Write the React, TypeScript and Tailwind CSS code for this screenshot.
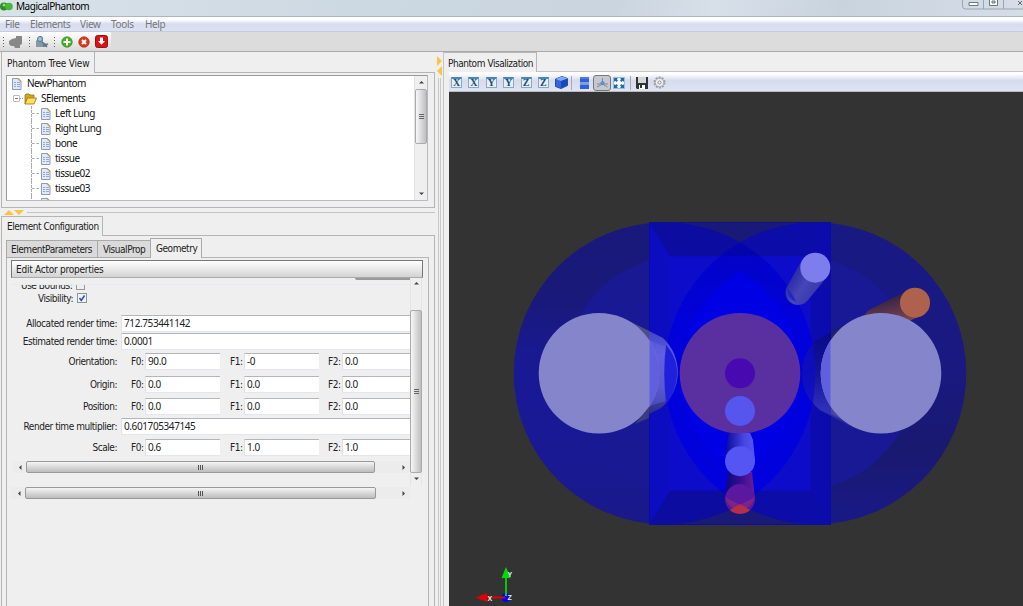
import React from 'react';

const tree = ['Left Lung', 'Right Lung', 'bone', 'tissue', 'tissue02', 'tissue03'];

function DocIcon() {
  return (
    <svg width="10" height="12" viewBox="0 0 10 12" className="shrink-0">
      <path d="M.5.5h6l2.500 2.500v8.500h-8.500z" fill="#dfe9f9" stroke="#8c9cb8" />
      <path d="M6 .5l3 3" stroke="#c4a35a" strokeWidth="1.400" />
      <path d="M2 4.500h2M5 4.500h3M2 6.500h2M5 6.500h3M2 8.500h2M5 8.500h3" stroke="#92a9d4" />
    </svg>
  );
}

function Folder() {
  return (
    <svg width="13" height="12" viewBox="0 0 13 12" className="shrink-0">
      <path d="M1 11V2l1-1h3l1 1h4v3" fill="#d3a61d" stroke="#8c7428" strokeWidth=".8" />
      <path d="M1 11 3.500 5h9L10 11z" fill="#ffdf59" stroke="#8f741d" strokeWidth=".8" />
    </svg>
  );
}

function Arrow({ dir }: { dir: 'up' | 'down' | 'left' | 'right' }) {
  const d = { up: 'M3 6.5 5.500 4 8 6.500z', down: 'M3 4.500h5L5.500 7z', left: 'M6.500 3v5L4 5.500z', right: 'M4.500 3v5L7 5.500z' }[dir];
  return (
    <svg width="11" height="11" viewBox="0 0 11 11" className="shrink-0">
      <path d={d} fill="#444" />
    </svg>
  );
}

function HBar({ className, thumb }: { className: string; thumb: string }) {
  return (
    <div className={'flex h-[12px] shrink-0 items-center bg-[#ececec] ' + className}>
      <Arrow dir="left" />
      <div className={'flex h-[12px] items-center justify-center gap-px rounded-[2px] border border-[#999] bg-gradient-to-b from-[#f5f5f5] via-[#d9d9d9] to-[#bdbdbd] ' + thumb}>
        <i className="h-[5px] w-px bg-[#555]" />
        <i className="h-[5px] w-px bg-[#555]" />
        <i className="h-[5px] w-px bg-[#555]" />
      </div>
      <div className="flex-1" />
      <div className="mr-px flex"><Arrow dir="right" /></div>
    </div>
  );
}

const Grip = () => (
  <div className="flex w-px flex-col gap-[2px]">
    <i className="h-px bg-[#666]" /><i className="h-px bg-[#666]" /><i className="h-px bg-[#666]" /><i className="h-px bg-[#666]" />
  </div>
);

const field = 'h-[17px] border-t border-l border-t-[#b4b4bd] border-l-[#e0e2ea] border-b border-b-[#e3e6ee] bg-white pl-[2px] font-[Noto_Sans] text-[10px] leading-[14px] tracking-[-0.4px]';

function Long({ label, value, className }: { label: string; value: string; className: string }) {
  return (
    <div className={'flex shrink-0 items-center ' + className}>
      <div className="w-[106px] text-right">{label}</div>
      <div className={'ml-[4px] flex-1 ' + field}>{value}</div>
    </div>
  );
}

function Triple({ label, values, className }: { label: string; values: string[]; className: string }) {
  return (
    <div className={'flex shrink-0 items-center ' + className}>
      <div className="w-[106px] text-right">{label}</div>
      {values.map((v, i) => (
        <div key={i} className={'flex items-center ' + (i === 0 ? 'ml-[14px] w-[89px] shrink-0' : i === 1 ? 'ml-[10px] w-[89px] shrink-0' : 'ml-[9px] flex-1')}>
          <span className="w-[14px] shrink-0 whitespace-nowrap">F{i}:</span>
          <div className={'flex-1 ' + field}>{v}</div>
        </div>
      ))}
    </div>
  );
}

function AxisIcon({ letter }: { letter: string }) {
  return (
    <div className="mr-[6.400px] flex h-[11px] w-[11px] shrink-0 items-center justify-center border border-t-2 border-[#8fa9ba] border-t-[#4c86b5] bg-[#e4f0f4] font-[Liberation_Serif] text-[10px] leading-[8px] font-bold tracking-normal text-[#174a7c]">
      {letter}
    </div>
  );
}

function Scene() {
  return (
    <svg className="block" width="574" height="514" viewBox="449 92 574 514">
      <defs>
        <clipPath id="box"><path d="M649.500 222.500H830.500V524.500H649.500z" /></clipPath>
        <clipPath id="left"><circle cx="664.700" cy="373.300" r="151" /></clipPath>
        <clipPath id="right"><circle cx="815.300" cy="373.300" r="151" /></clipPath>
        <clipPath id="rearbox"><path d="M669.500 256.300H810.500V490.500H669.500z" /></clipPath>
        <clipPath id="rearleft"><circle cx="681.500" cy="373.300" r="117.200" /></clipPath>
        <clipPath id="lowred"><path d="M725 513 740 504l15 9v6h-30z" /></clipPath>
        <clipPath id="lung"><circle cx="599" cy="373.300" r="60.300" /></clipPath>
        <clipPath id="lung2"><circle cx="881" cy="373.300" r="60.300" /></clipPath>
        <linearGradient id="shell" x1="0" y1="0" x2="0" y2="1"><stop offset="0" stopColor="#19197c" /><stop offset=".25" stopColor="#191979" /><stop offset=".42" stopColor="#191990" /><stop offset=".6" stopColor="#191997" /><stop offset=".85" stopColor="#191991" /><stop offset="1" stopColor="#191988" /></linearGradient>
        <linearGradient id="shell2" x1="0" y1="0" x2="0" y2="1"><stop offset="0" stopColor="#191984" /><stop offset=".5" stopColor="#191980" /><stop offset=".75" stopColor="#191970" /><stop offset="1" stopColor="#191988" /></linearGradient>
        <linearGradient id="rearshell" x1="0" y1="0" x2="0" y2="1"><stop offset="0" stopColor="#191992" /><stop offset=".5" stopColor="#191997" /><stop offset="1" stopColor="#191992" /></linearGradient>
        <linearGradient id="lens" x1="0" y1="0" x2="0" y2="1"><stop offset=".1" stopColor="#0303c8" /><stop offset=".35" stopColor="#0101dc" /><stop offset="1" stopColor="#0101de" /></linearGradient>
        <linearGradient id="cyl" x1="0" y1="0" x2="0" y2="1"><stop offset="0" stopColor="#3939b8" /><stop offset=".35" stopColor="#5a5adf" /><stop offset=".65" stopColor="#5050c8" /><stop offset="1" stopColor="#202068" /></linearGradient>
        <linearGradient id="cyl2" x1="0" y1="0" x2="0" y2="1"><stop offset="0" stopColor="#070784" /><stop offset=".5" stopColor="#14149c" /><stop offset=".85" stopColor="#3030b8" /><stop offset="1" stopColor="#2525a5" /></linearGradient>
        <linearGradient id="spine"><stop offset="0" stopColor="#080896" /><stop offset=".65" stopColor="#4747e4" /><stop offset="1" stopColor="#5555f4" /></linearGradient>
        <linearGradient id="spineRed"><stop offset="0" stopColor="#08087c" /><stop offset=".5" stopColor="#340e90" /><stop offset="1" stopColor="#6c1b9d" /></linearGradient>
        <linearGradient id="rod" gradientUnits="userSpaceOnUse" x1="793" y1="278" x2="814" y2="292"><stop offset="0" stopColor="#2e2ea8" /><stop offset=".5" stopColor="#4646b8" /><stop offset="1" stopColor="#3b3bac" /></linearGradient>
        <linearGradient id="rodOrange" x1="0" y1="0" x2=".3" y2="1"><stop offset=".1" stopColor="#291c44" /><stop offset=".7" stopColor="#683b4c" /><stop offset="1" stopColor="#8b4c4c" /></linearGradient>
      </defs>
      <rect x="449" y="92" width="574" height="514" fill="#333" />
      <circle cx="664.700" cy="373.300" r="151" fill="url(#shell)" />
      <circle cx="815.300" cy="373.300" r="151" fill="url(#shell2)" />
      <circle cx="681.500" cy="373.300" r="117.200" fill="url(#rearshell)" />
      <circle cx="798.500" cy="373.300" r="117.200" fill="#191996" />
      <g clipPath="url(#box)">
        <rect x="649" y="222" width="182" height="303" fill="#191978" />
        <circle cx="664.700" cy="373.300" r="151" fill="#0c0ca0" />
        <circle cx="815.300" cy="373.300" r="151" fill="#0c0ca8" />
        <path d="M649 222l21 34v235l-21 34z" fill="#0c0cc0" />
        <path d="M831 222l-20.500 34v235l20.500 34z" fill="#0c0cae" />
        <g clipPath="url(#rearbox)">
          <rect x="669" y="256" width="142" height="235" fill="#0c0cca" />
        </g>
        <g clipPath="url(#left)">
          <circle cx="815.300" cy="373.300" r="151" fill="url(#lens)" />
          <g clipPath="url(#right)">
            <path d="M660 222h160v34.300H660z" fill="#0404ac" />
            <path d="M660 490.500h160v35H660z" fill="#0404b4" />
          </g>
        </g>
        <g clipPath="url(#rearleft)">
          <circle cx="798.500" cy="373.300" r="117.200" fill="#0000e4" />
        </g>
      </g>
      <path d="M649.500 524V222.500H830.500V524.500H649.500" fill="none" stroke="#0909a8" strokeWidth=".8" />
      <path d="M622 318 649 331 663 338A46.800 46.800 0 0 1 661 408L632 423z" fill="url(#cyl)" />
      <path d="M666 345c8 9 11 18 11 28s-4 23-11 31q-4-31 0-59" fill="#2020dc" />
      <path d="M625 319l24 12v11z" fill="#4d4d88" />
      <path d="M649 340l17 7q-3 25 0 54l-17 5z" fill="#6868e4" opacity=".4" />
      <circle cx="599" cy="373.300" r="60.300" fill="#8585cc" />
      <g clipPath="url(#lung)"><path d="M649.500 300h20v150h-20z" fill="#6060de" /></g>
      <path d="M649 407v11l-14 6z" fill="#3b3b80" />
      <path d="M849 322 814 342A46.800 46.800 0 0 0 820 410L850 426z" fill="url(#cyl2)" />
      <path d="M831 332l22-11v25l-22 24z" fill="#20206c" />
      <path d="M831 405l25 22-25-13z" fill="#47479d" />
      <path d="M813 343q-11 12-11 30t11 30q4-30 0-60" fill="#0c0cc6" opacity=".8" />
      <path d="M903 293 871 309q-9 4-6 12l22 10 31-14z" fill="url(#rodOrange)" />
      <circle cx="915" cy="302.700" r="15" fill="#af624b" />
      <circle cx="881" cy="373.300" r="60.300" fill="#8585cc" />
      <g clipPath="url(#lung2)"><path d="M815 300h15.500v150h-15.500z" fill="#6060de" /></g>
      <path d="M802 260 788 285A11.700 11.700 0 0 0 808 300L827 277z" fill="url(#rod)" />
      <path d="M787.500 288q5 6 9 14-9-3-9-14z" fill="#2525c4" />
      <circle cx="815.300" cy="267.700" r="15" fill="#7d7ded" />
      <circle cx="740" cy="373.300" r="60.300" fill="#5a2fa0" />
      <circle cx="740" cy="373.300" r="15" fill="#4909b0" />
      <circle cx="740" cy="411" r="15" fill="#5656ee" />
      <path d="M728 472h24l3 27h-30z" fill="url(#spineRed)" />
      <path d="M729 433h21l3 7 2 21h-30l3-23z" fill="url(#spine)" />
      <circle cx="740" cy="461.200" r="15" fill="#5555f3" />
      <circle cx="740" cy="499" r="15" fill="#5a18a0" />
      <path d="M725.200 497 740 505l14.800-8a15 15 0 0 1-29.600 0" fill="#7d2482" />
      <g clipPath="url(#lowred)"><circle cx="740" cy="499" r="15" fill="#b33047" /></g>
      <circle cx="506" cy="597.500" r="4.500" fill="#0000f5" />
      <path d="M506 596V577" stroke="#0c0" strokeWidth="2" />
      <path d="M501.500 578 506 567l4.500 11z" fill="#00dc00" />
      <path d="M505 597.500H486" stroke="#e00000" strokeWidth="2" />
      <path d="M475.500 597.500 487 593v9z" fill="#df0000" />
      <g fill="#eee" fontFamily="Liberation Sans" fontSize="7" fontWeight="bold"><text x="507.500" y="576.500">Y</text><text x="487.500" y="600.500">X</text><text x="507.500" y="600">Z</text></g>
    </svg>
  );
}

export default function App() {
  return (
    <div className="flex h-[606px] w-[1023px] flex-col overflow-hidden bg-[#efefef] font-[DejaVu_Sans_Condensed] text-[10px] tracking-[-0.45px] whitespace-nowrap text-[#222]">
      <header className="flex h-[17px] shrink-0 justify-between border-b border-[#aeb5bc] bg-[linear-gradient(100deg,#d9e2e9_0%,#cbd7e1_40%,#cbd5df_60%,#d7e0e9_70%,#c9d3de_82%,#d5dee7_100%)]">
        <div className="flex h-[13px] items-center font-[Noto_Sans] text-[10px] leading-[13px] tracking-[-0.45px] text-black">
          <svg width="13" height="11" viewBox="0 0 13 11" className="mr-[3px]"><circle cx="4" cy="5.500" r="4" fill="#2f8d28" /><circle cx="9" cy="5.500" r="3.800" fill="#48b637" /><circle cx="4" cy="4" r="1.500" fill="#8edb79" /></svg>
          MagicalPhantom
        </div>
        <svg width="61" height="10" viewBox="0 0 61 10" fill="none"><path d="M.5 0v6q0 3 3 3H61M21.500 0v9M41.500 0v9" stroke="#99a5b1" /><path d="M7 2.500h9v3H7z" fill="#fff" stroke="#6c7784" /><path d="M27.500 0v5.500h8V0M30 1h3v2h-3z" fill="#fff" stroke="#6c7784" /><path d="M56 1l4 4M60 1l-4 4" stroke="#666" /></svg>
      </header>
      <nav className="flex h-[15px] shrink-0 items-center border-b border-[#c7cbdc] bg-gradient-to-b from-white from-20% via-[#d7ddef] via-50% to-[#dce2f4] pt-px pl-[5px] font-[Noto_Sans] text-[10px] tracking-[-0.35px] text-[#777]">
        <span className="w-[25px]">File</span><span className="w-[50px]">Elements</span><span className="w-[31px]">View</span><span className="w-[34px]">Tools</span><span>Help</span>
      </nav>
      <div className="flex h-[20px] shrink-0 border-b border-[#aaa] bg-[#dcdcdc]">
        <div className="flex h-[19px] items-center bg-gradient-to-b from-white to-[#d8d8d8] pl-[3px]">
          <Grip />
          <svg width="15" height="14" viewBox="0 0 15 14" className="ml-[4px]"><path d="M1 6l3-2 4-1V1h6v8l-2 1v3H7l-1-2H3L1 9z" fill="#888" /></svg>
          <div className="ml-[6px] flex"><Grip /></div>
          <svg width="15" height="14" viewBox="0 0 15 14" className="ml-[4px]"><path d="M2 11V6l2-3q3-4 5 0v4l4 2v3H2z" fill="#8499a8" /><circle cx="6" cy="4" r="2.500" fill="#9fc5dd" stroke="#5a7687" /><path d="M8 7l5 5M9 11l5-2" stroke="#60778a" strokeWidth="1.500" /></svg>
          <div className="ml-[5px] flex"><Grip /></div>
          <svg width="12" height="12" viewBox="0 0 12 12" className="ml-[6px]"><circle cx="6" cy="6" r="5.300" fill="#47af24" stroke="#318619" strokeWidth=".6" /><path d="M6 2.500v7M2.500 6h7" stroke="#fff" strokeWidth="2" /></svg>
          <svg width="12" height="12" viewBox="0 0 12 12" className="ml-[5px]"><circle cx="6" cy="6" r="5.300" fill="#dc391e" stroke="#ae2414" strokeWidth=".6" /><path d="M4 4l4 4M8 4L4 8" stroke="#fff" strokeWidth="1.900" /></svg>
          <svg width="13" height="13" viewBox="0 0 13 13" className="mr-[3px] ml-[5px]"><rect x=".5" y=".5" width="12" height="12" rx="2" fill="#d81515" stroke="#9b1414" /><path d="M5 2.500h3V6h2L6.500 9.800 3 6h2z" fill="#fff" /></svg>
        </div>
      </div>
      <main className="flex min-h-0 flex-1">
        <section className="flex w-[435px] shrink-0 flex-col pl-px">
          <div className="flex h-[21px] shrink-0 items-end">
            <div className="flex h-[21px] w-[94px] items-center border-r border-l border-[#b5b5b5] pt-px pl-[5px] tracking-[-0.2px]">Phantom Tree View</div>
            <div className="h-px flex-1 bg-[#b5b5b5]" />
          </div>
          <div className="h-[135px] shrink-0 border-x border-b border-[#b5b5b5] pt-[2px] pr-[6px] pl-[4px]">
            <div className="flex h-[126px] border border-t-[#999] border-r-[#b9b9c2] border-b-[#b9b9c2] border-l-[#999] bg-white">
              <div className="flex-1 overflow-hidden font-[Noto_Sans] text-[10px] tracking-[-0.5px] text-[#111]">
                <div className="flex h-[15px] items-center gap-[5px] pl-[5px]"><DocIcon />NewPhantom</div>
                <div className="flex h-[15px] items-center pl-[6px]">
                  <div className="flex h-[7px] w-[7px] items-center justify-center rounded-[1px] border border-[#bbb]"><i className="h-px w-[3px] bg-[#779]" /></div>
                  <div className="mr-[1px] w-[3px] border-t border-dotted border-[#999]" /><Folder /><span className="ml-[4px]">SElements</span>
                </div>
                {tree.map((name) => (
                  <div key={name} className="flex h-[15px] items-center pl-[24px]">
                    <div className="h-[15px] border-l border-dashed border-[#aaa]" /><div className="mr-[2px] w-[7px] border-t border-dashed border-[#aaa]" />
                    <DocIcon /><span className="ml-[4px]">{name}</span>
                  </div>
                ))}
                <div className="flex h-[15px] items-center pl-[24px]"><div className="h-[15px] border-l border-dashed border-[#aaa]" /><div className="mr-[2px] w-[7px]" /><DocIcon /></div>
              </div>
              <div className="flex w-[13px] flex-col items-center border-l border-[#e3e3e3] bg-[#efefef] py-px">
                <Arrow dir="up" />
                <div className="mt-px flex h-[55px] w-[12px] flex-col items-center justify-center gap-px rounded-[2px] border border-[#aaa] bg-gradient-to-r from-[#f7f7f7] to-[#bfbfc1]"><i className="h-px w-[5px] bg-[#666]" /><i className="h-px w-[5px] bg-[#666]" /><i className="h-px w-[5px] bg-[#666]" /></div>
                <div className="flex-1" /><Arrow dir="down" />
              </div>
            </div>
          </div>
          <div className="flex h-[8px] shrink-0 items-center pl-[3px]">
            <svg width="20" height="5" viewBox="0 0 20 5"><path d="M0 5 5 0l5 5zM10 0h10l-5 5z" fill="#fcc43c" /></svg>
            <div className="ml-[3px] h-px flex-1 bg-[#c4c4c4]" />
          </div>
          <div className="flex h-[20px] shrink-0 items-end">
            <div className="flex h-[20px] w-[102px] items-center border-t border-r border-l border-[#b5b5b5] pl-[5px]">Element Configuration</div>
            <div className="h-px flex-1 bg-[#b5b5b5]" />
          </div>
          <div className="flex min-h-0 flex-1 flex-col border-x border-[#b5b5b5] pt-[2px] pr-[5px] pl-[4px]">
            <div className="flex h-[20px] shrink-0 items-end">
              <div className="flex h-[18px] w-[92px] items-center border border-[#aaa] bg-[#dadada] pl-[4px]">ElementParameters</div>
              <div className="flex h-[18px] w-[52px] items-center border-y border-[#aaa] bg-[#dadada] pl-[5px]">VisualProp</div>
              <div className="flex h-[20px] w-[52px] items-center border-x border-t border-[#aaa] pl-[5px]">Geometry</div>
              <div className="h-px flex-1 bg-[#b5b5b5]" />
            </div>
            <div className="flex min-h-0 flex-1 flex-col border-x border-[#b5b5b5] pt-[2px] pr-[5px] pl-[4px]">
              <div className="flex h-[18px] shrink-0 items-center border border-[#777] border-b-[#aaa] bg-gradient-to-b from-white to-[#d3d3d3] pl-[4px] tracking-[-0.25px]">Edit Actor properties</div>
              <div className="flex h-[208px] shrink-0">
                <div className="flex w-[399px] flex-col">
                  <div className="flex h-[7px] shrink-0 justify-end border-b border-[#e4ecf0]"><div className="h-[2px] w-[55px] rounded-bl bg-[#999]" /></div>
                  <div className="flex h-[6px] shrink-0 items-end overflow-hidden pl-[10px]"><span className="leading-[11px]">Use Bounds:</span><i className="mb-px ml-[4px] h-[9px] w-[9px] border border-[#999] bg-[#eee]" /></div>
                  <div className="flex h-[14px] shrink-0 items-center"><span className="w-[62px] text-right">Visibility:</span>
                    <svg width="10" height="10" viewBox="0 0 10 10" className="ml-[4px]"><rect x=".5" y=".5" width="9" height="9" fill="#eef1f7" stroke="#8e949e" /><path d="M2.500 5 4.300 7.500 7.500 2.500" fill="none" stroke="#3d4c96" strokeWidth="1.500" /></svg>
                  </div>
                  <Long label="Allocated render time:" value="712.753441142" className="mt-[9px] h-[18px]" />
                  <Long label="Estimated render time:" value="0.0001" className="h-[18px]" />
                  <Triple label="Orientation:" values={['90.0', '-0', '0.0']} className="mt-[3px] h-[17px]" />
                  <Triple label="Origin:" values={['0.0', '0.0', '0.0']} className="mt-[6px] h-[17px]" />
                  <Triple label="Position:" values={['0.0', '0.0', '0.0']} className="mt-[5px] h-[17px]" />
                  <Long label="Render time multiplier:" value="0.601705347145" className="mt-[3px] h-[17px]" />
                  <Triple label="Scale:" values={['0.6', '1.0', '1.0']} className="mt-[4px] h-[17px]" />
                  <HBar className="mt-[5px] ml-[2px] pl-[2px]" thumb="w-[349px]" />
                </div>
                <div className="flex w-[12px] flex-col items-center border-x border-[#e5e5e5]">
                  <Arrow dir="up" />
                  <div className="mt-[21px] flex h-[163px] w-[12px] flex-col items-center justify-center gap-px rounded-[2px] border border-[#aaa] bg-gradient-to-r from-[#f7f7f7] to-[#bfbfc1]"><i className="h-px w-[5px] bg-[#666]" /><i className="h-px w-[5px] bg-[#666]" /><i className="h-px w-[5px] bg-[#666]" /></div>
                  <Arrow dir="down" />
                </div>
              </div>
              <HBar className="mt-px w-[399px] pl-[3px]" thumb="w-[351px]" />
            </div>
          </div>
        </section>
        <div className="flex w-[8px] shrink-0 flex-col items-center pt-[4px]">
          <svg width="6" height="20" viewBox="0 0 6 20"><path d="M1 0l5 5-5 5zM6 10v10l-5-5z" fill="#fcc43c" /></svg>
          <div className="mt-[2px] w-[3px] flex-1 border-x border-[#c8c8c8]" />
        </div>
        <section className="flex flex-1 flex-col border-l border-[#c5c5c5]">
          <div className="flex h-[20px] shrink-0 items-end">
            <div className="flex h-[20px] w-[93px] items-center border-t border-r border-[#b5b5b5] pt-px pl-[4px]">Phantom Visalization</div>
            <div className="h-px flex-1 bg-[#c5c5c5]" />
          </div>
          <div className="ml-[5px] flex h-[20px] shrink-0 items-center border-b border-[#bbb] bg-gradient-to-b from-white from-10% via-[#d6dbee] via-45% to-[#dee5f5] pt-[2px] pl-[2px]">
            {['X', 'X', 'Y', 'Y', 'Z', 'Z'].map((c, i) => <AxisIcon key={i} letter={c} />)}
            <svg width="13" height="13" viewBox="0 0 13 13"><path d="M.5 3 7 .5l5.500 2v7L6 12.500l-5.500-2z" fill="#3264dc" stroke="#254db0" /><path d="M.5 3 6 5l6.500-2.500L7 .5z" fill="#82aaff" /><path d="M6 5v7l6-3V3z" fill="#1649bc" /></svg>
            <i className="ml-[3px] h-[14px] w-px bg-[#aaa]" />
            <svg width="9" height="12" viewBox="0 0 9 12" className="ml-[8px]"><path d="M0 0h9v5.500H0zM0 6.500h9V12H0z" fill="#315fd5" /><path d="M0 1h9M0 7.500h9" stroke="#7498ec" /></svg>
            <div className="ml-[4px] flex h-[16px] w-[18px] items-center justify-center rounded-[3px] border border-[#777] bg-[#c5c8d2]">
              <svg width="13" height="12" viewBox="0 0 13 12"><path d="M6.500 1v6L1 10M6.500 7l5 3M1 7h11" stroke="#888" fill="none" /><path d="M6.500 3.500 9 6 6.500 8.500 4 6z" fill="#4e91d8" /></svg>
            </div>
            <svg width="12" height="12" viewBox="0 0 12 12" className="ml-[2px]"><rect x=".5" y=".5" width="11" height="11" fill="#f4faff" stroke="#9dbdd5" /><path d="M1 1h4L3.800 2.200 5 3.500 3.500 5 2.200 3.800 1 5zM11 1v4L9.800 3.800 8.500 5 7 3.500 8.200 2.200 7 1zM1 11V7l1.200 1.200L3.500 7 5 8.500 3.800 9.800 5 11zM11 11H7l1.200-1.200L7 8.500 8.500 7l1.300 1.200L11 7z" fill="#246aa6" /></svg>
            <i className="ml-[5px] h-[14px] w-px bg-[#aaa]" />
            <svg width="12" height="12" viewBox="0 0 12 12" className="ml-[5px]"><path d="M0 0h12v12H1l-1-1z" fill="#333" /><path d="M2 0h8v6H2z" fill="#d5d8d8" /><path d="M3 8h6v4H3z" fill="#fff" /><path d="M4 8h2v3H4z" fill="#333" /></svg>
            <svg width="13" height="13" viewBox="0 0 13 13" className="ml-[5px]" fill="none"><circle cx="6.500" cy="6.500" r="5" stroke="#9d9da1" strokeWidth="2" strokeDasharray="2 1.140" /><circle cx="6.500" cy="6.500" r="4.200" fill="#eee" stroke="#aaa" /><circle cx="6.500" cy="6.500" r="1.500" fill="#fff" stroke="#888" /></svg>
          </div>
          <div className="ml-[5px] overflow-hidden"><Scene /></div>
        </section>
      </main>
    </div>
  );
}
